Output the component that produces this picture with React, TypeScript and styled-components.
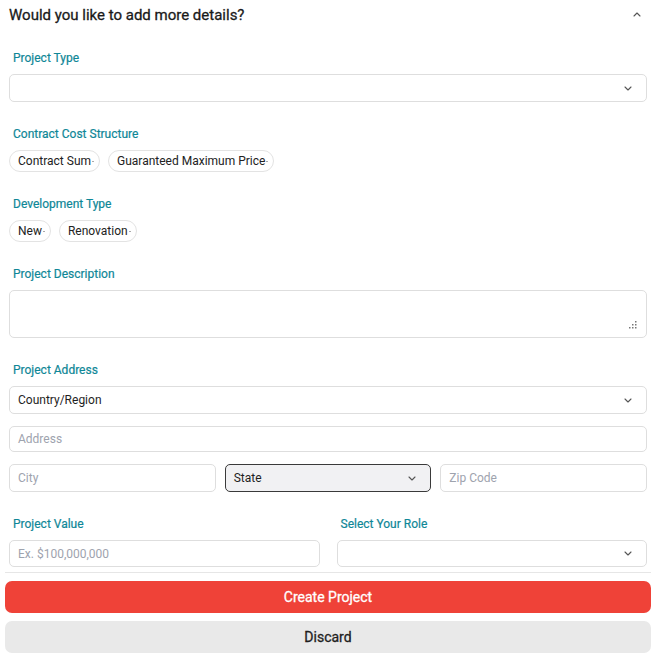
import React from "react";
import styled, { createGlobalStyle } from "styled-components";

const Global = createGlobalStyle`
  html, body { margin: 0; padding: 0; background: #fff; }
  body { font-family: Roboto, "Noto Sans", Arial, sans-serif; color: #1f1f1f; }
  * { box-sizing: border-box; }
`;

const Page = styled.div`
  width: 654px;
  height: 658px;
  padding: 0 3px 0 5px;
  display: flex;
  flex-direction: column;
`;

const Header = styled.div`
  height: 29px;
  flex-shrink: 0;
  display: flex;
  align-items: center;
  justify-content: space-between;
  padding: 0 10px 0 4px;
`;

const Title = styled.div`
  font-size: 15px;
  font-weight: 400;
  color: #1a1a1a;
  -webkit-text-stroke: 0.3px #1a1a1a;
`;

const Form = styled.div`
  padding: 21px 4px 0 4px;
  display: flex;
  flex-direction: column;
  gap: 24px;
  height: 540px;
  flex-shrink: 0;
`;

const Section = styled.div`
  display: flex;
  flex-direction: column;
`;

const Label = styled.div`
  font-size: 12px;
  font-weight: 400;
  line-height: 16px;
  color: #0f8797;
  padding-left: 4px;
  margin-bottom: 8px;
  -webkit-text-stroke: 0.2px #0f8797;
`;

const Field = styled.div<{ $h?: number; $active?: boolean }>`
  position: relative;
  flex-shrink: 0;
  height: ${(p) => p.$h ?? 28}px;
  border: 1px solid ${(p) => (p.$active ? "#3a3a3a" : "#dedede")};
  background: ${(p) => (p.$active ? "#f1f1f3" : "#fff")};
  border-radius: 5px;
  display: flex;
  align-items: center;
  justify-content: space-between;
  padding: 0 14px 0 8px;
  font-size: 12px;
`;

const Value = styled.span`
  color: #1f1f1f;
`;

const Placeholder = styled.span`
  color: #9ea3ae;
`;

const Stack = styled.div<{ $gap: number }>`
  display: flex;
  flex-direction: column;
  gap: ${(p) => p.$gap}px;
`;

const Row = styled.div<{ $gap: number }>`
  display: flex;
  gap: ${(p) => p.$gap}px;
  & > * {
    flex: 1 1 0;
    min-width: 0;
  }
`;

const Chips = styled.div`
  display: flex;
  gap: 8px;
`;

const Chip = styled.div`
  height: 22px;
  border: 1px solid #e3e3e3;
  border-radius: 999px;
  display: flex;
  align-items: center;
  padding: 0 5px 0 8px;
  font-size: 12px;
  color: #222;
`;

const Dot = styled.span`
  display: inline-block;
  width: 2px;
  height: 1px;
  background: #aaa;
  margin-left: 1px;
  margin-top: 1px;
`;

const Grip = styled.svg`
  position: absolute;
  right: 9px;
  bottom: 8px;
`;

const Col = styled.div`
  display: flex;
  flex-direction: column;
`;

const Footer = styled.div`
  border-top: 1px solid #e6e6e6;
  margin-top: 3px;
  padding-top: 8px;
  display: flex;
  flex-direction: column;
  gap: 8px;
`;

const Button = styled.button<{ $primary?: boolean }>`
  height: 32px;
  border: none;
  border-radius: 7px;
  font-family: Roboto, "Noto Sans", Arial, sans-serif;
  font-size: 14px;
  font-weight: 400;
  background: ${(p) => (p.$primary ? "#ef4238" : "#e9e9e9")};
  color: ${(p) => (p.$primary ? "#fff" : "#1e1e1e")};
  -webkit-text-stroke: 0.3px ${(p) => (p.$primary ? "#fff" : "#1e1e1e")};
`;

const Chevron = ({ up }: { up?: boolean }) => (
  <svg width="8" height="5" viewBox="0 0 8 5" fill="none">
    <path
      d={up ? "M1 4 L4 1 L7 4" : "M1 1 L4 4 L7 1"}
      stroke="#555"
      strokeWidth="1.1"
      strokeLinecap="round"
      strokeLinejoin="round"
    />
  </svg>
);

export default function App() {
  return (
    <>
      <Global />
      <Page>
        <Header>
          <Title>Would you like to add more details?</Title>
          <Chevron up />
        </Header>
        <Form>
          <Section>
            <Label>Project Type</Label>
            <Field>
              <span />
              <Chevron />
            </Field>
          </Section>
          <Section>
            <Label>Contract Cost Structure</Label>
            <Chips>
              <Chip>Contract Sum<Dot /></Chip>
              <Chip>Guaranteed Maximum Price<Dot /></Chip>
            </Chips>
          </Section>
          <Section>
            <Label>Development Type</Label>
            <Chips>
              <Chip>New<Dot /></Chip>
              <Chip>Renovation<Dot /></Chip>
            </Chips>
          </Section>
          <Section>
            <Label>Project Description</Label>
            <Field $h={48}>
              <Grip width="8" height="8" viewBox="0 0 8 8">
                <rect x="6" y="0" width="1.5" height="1.5" fill="#777" />
                <rect x="6" y="3" width="1.5" height="1.5" fill="#777" />
                <rect x="3" y="3" width="1.5" height="1.5" fill="#777" />
                <rect x="6" y="6" width="1.5" height="1.5" fill="#777" />
                <rect x="3" y="6" width="1.5" height="1.5" fill="#777" />
                <rect x="0" y="6" width="1.5" height="1.5" fill="#777" />
              </Grip>
            </Field>
          </Section>
          <Section>
            <Label>Project Address</Label>
            <Stack $gap={12}>
              <Field>
                <Value>Country/Region</Value>
                <Chevron />
              </Field>
              <Field $h={26}>
                <Placeholder>Address</Placeholder>
              </Field>
              <Row $gap={9}>
                <Field>
                  <Placeholder>City</Placeholder>
                </Field>
                <Field $active>
                  <Value>State</Value>
                  <Chevron />
                </Field>
                <Field>
                  <Placeholder>Zip Code</Placeholder>
                </Field>
              </Row>
            </Stack>
          </Section>
          <Row $gap={17}>
            <Col>
              <Label>Project Value</Label>
              <Field $h={27}>
                <Placeholder>Ex. $100,000,000</Placeholder>
              </Field>
            </Col>
            <Col>
              <Label>Select Your Role</Label>
              <Field $h={27}>
                <span />
                <Chevron />
              </Field>
            </Col>
          </Row>
        </Form>
        <Footer>
          <Button $primary>Create Project</Button>
          <Button>Discard</Button>
        </Footer>
      </Page>
    </>
  );
}
